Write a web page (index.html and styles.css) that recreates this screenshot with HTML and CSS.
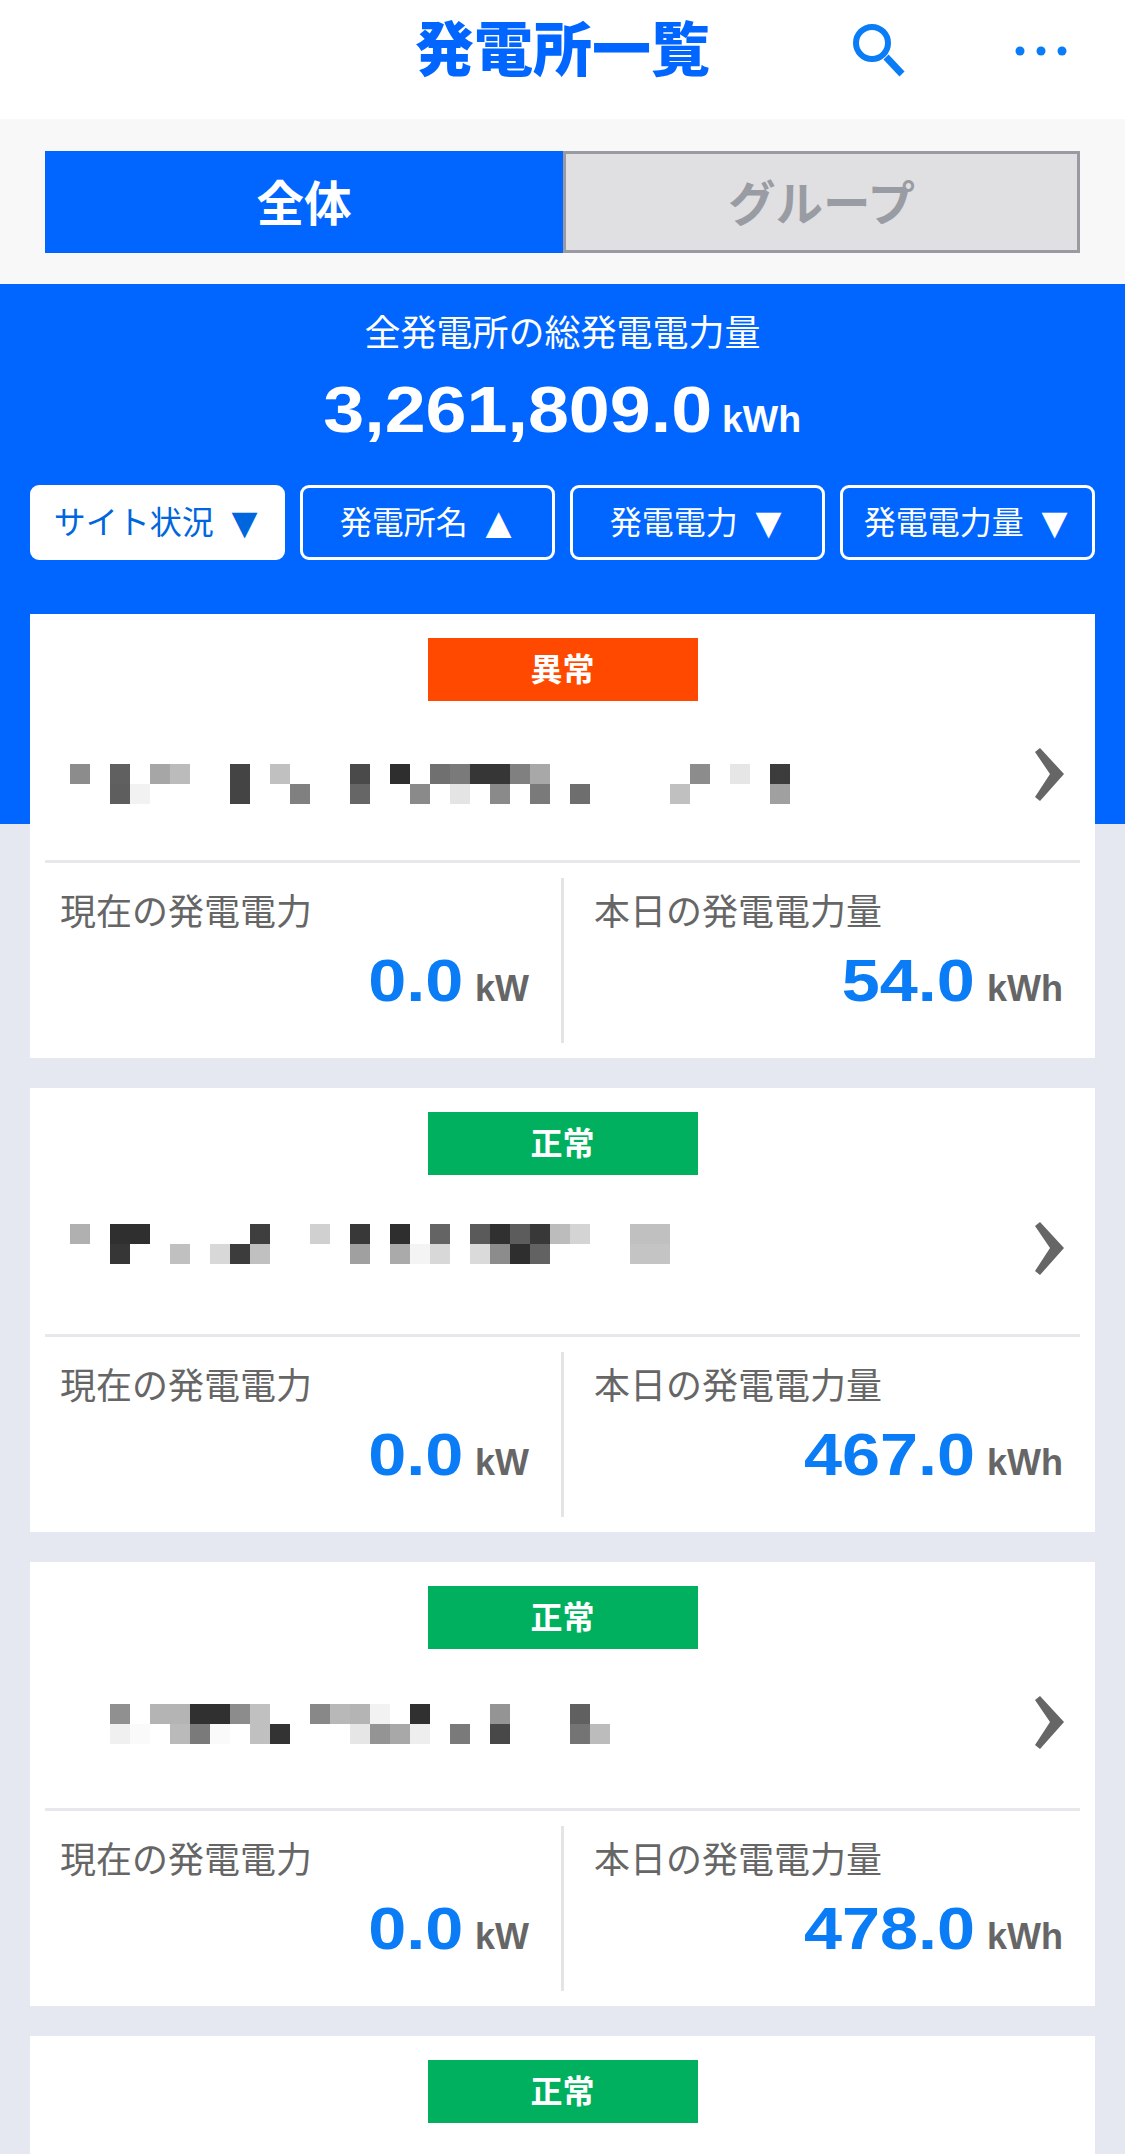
FILE: index.html
```html
<!DOCTYPE html>
<html lang="ja">

<head>
    <meta charset="UTF-8">
    <meta name="viewport" content="width=device-width, initial-scale=1.0">
    <title>発電所一覧</title>
    <link rel="stylesheet" href="styles.css">
</head>

<body>
    <header class="app-bar">
        <div></div>
        <h1>発電所一覧</h1>
        <div class="app-actions">
            <svg class="icon-search" width="52" height="54" viewBox="0 0 52 54">
                <circle cx="19" cy="19" r="16" fill="none" stroke="#0a7cf5" stroke-width="6" />
                <path d="M33 33 L49 50" fill="none" stroke="#0a7cf5" stroke-width="7" />
            </svg>
            <svg class="icon-more" width="52" height="10" viewBox="0 0 52 10">
                <circle cx="5" cy="5" r="4.5" fill="#0a7cf5" />
                <circle cx="26" cy="5" r="4.5" fill="#0a7cf5" />
                <circle cx="47" cy="5" r="4.5" fill="#0a7cf5" />
            </svg>
        </div>
    </header>

    <div class="tabs-wrap">
        <div class="tabs">
            <button class="tab active">全体</button>
            <button class="tab">グループ</button>
        </div>
    </div>

    <main class="content">
        <section class="summary">
            <p class="summary-title">全発電所の総発電電力量</p>
            <p class="summary-total"><span class="summary-num">3,261,809.0</span><span class="summary-unit">kWh</span></p>
            <div class="sorts">
                <button class="sort active">サイト状況 <span class="arrow">▼</span></button>
                <button class="sort">発電所名 <span class="arrow">▲</span></button>
                <button class="sort">発電電力 <span class="arrow">▼</span></button>
                <button class="sort">発電電力量 <span class="arrow">▼</span></button>
            </div>
        </section>

        <article class="card">
            <div class="badge alert">異常</div>
            <div class="name-row">
                <svg class="mosaic" width="720" height="146" viewBox="0 0 720 146" shape-rendering="crispEdges">
                    <g transform="translate(0 63)">
                        <rect x="0" y="0" width="20" height="20" fill="#8c8c8c" />
                        <rect x="40" y="0" width="20" height="20" fill="#606060" />
                        <rect x="80" y="0" width="20" height="20" fill="#a6a6a6" />
                        <rect x="100" y="0" width="20" height="20" fill="#bbbbbb" />
                        <rect x="160" y="0" width="20" height="20" fill="#444444" />
                        <rect x="200" y="0" width="20" height="20" fill="#c0c0c0" />
                        <rect x="280" y="0" width="20" height="20" fill="#4a4a4a" />
                        <rect x="320" y="0" width="20" height="20" fill="#2e2e2e" />
                        <rect x="360" y="0" width="20" height="20" fill="#707070" />
                        <rect x="380" y="0" width="20" height="20" fill="#7a7a7a" />
                        <rect x="400" y="0" width="40" height="20" fill="#363636" />
                        <rect x="440" y="0" width="20" height="20" fill="#808080" />
                        <rect x="460" y="0" width="20" height="20" fill="#a8a8a8" />
                        <rect x="620" y="0" width="20" height="20" fill="#8c8c8c" />
                        <rect x="660" y="0" width="20" height="20" fill="#e6e6e6" />
                        <rect x="700" y="0" width="20" height="20" fill="#3c3c3c" />
                        <rect x="40" y="20" width="20" height="20" fill="#5e5e5e" />
                        <rect x="60" y="20" width="20" height="20" fill="#f2f2f2" />
                        <rect x="160" y="20" width="20" height="20" fill="#444444" />
                        <rect x="220" y="20" width="20" height="20" fill="#808080" />
                        <rect x="280" y="20" width="20" height="20" fill="#666666" />
                        <rect x="340" y="20" width="20" height="20" fill="#8a8a8a" />
                        <rect x="380" y="20" width="20" height="20" fill="#e4e4e4" />
                        <rect x="420" y="20" width="20" height="20" fill="#8a8a8a" />
                        <rect x="460" y="20" width="20" height="20" fill="#7a7a7a" />
                        <rect x="500" y="20" width="20" height="20" fill="#6e6e6e" />
                        <rect x="600" y="20" width="20" height="20" fill="#c0c0c0" />
                        <rect x="700" y="20" width="20" height="20" fill="#a0a0a0" />
                    </g>
                </svg>
                <svg class="chevron" width="30" height="54" viewBox="0 0 30 54">
                    <polygon points="0,4 5,0 29,26 5,53 0,49 15,26" fill="#666666" />
                </svg>
            </div>
            <div class="stats">
                <div class="stat now">
                    <p class="stat-label">現在の発電電力</p>
                    <p class="stat-value"><span class="stat-num">0.0</span><span class="stat-unit">kW</span></p>
                </div>
                <div class="stat today">
                    <p class="stat-label">本日の発電電力量</p>
                    <p class="stat-value"><span class="stat-num">54.0</span><span class="stat-unit">kWh</span></p>
                </div>
            </div>
        </article>

        <article class="card">
            <div class="badge ok">正常</div>
            <div class="name-row">
                <svg class="mosaic" width="720" height="146" viewBox="0 0 720 146" shape-rendering="crispEdges">
                    <g transform="translate(0 49)">
                        <rect x="0" y="0" width="20" height="20" fill="#b0b0b0" />
                        <rect x="40" y="0" width="40" height="20" fill="#2f2f2f" />
                        <rect x="180" y="0" width="20" height="20" fill="#3e3e3e" />
                        <rect x="240" y="0" width="20" height="20" fill="#d0d0d0" />
                        <rect x="280" y="0" width="20" height="20" fill="#383838" />
                        <rect x="320" y="0" width="20" height="20" fill="#2e2e2e" />
                        <rect x="360" y="0" width="20" height="20" fill="#646464" />
                        <rect x="400" y="0" width="20" height="20" fill="#5a5a5a" />
                        <rect x="420" y="0" width="20" height="20" fill="#303030" />
                        <rect x="440" y="0" width="20" height="20" fill="#5c5c5c" />
                        <rect x="460" y="0" width="20" height="20" fill="#383838" />
                        <rect x="480" y="0" width="20" height="20" fill="#bcbcbc" />
                        <rect x="500" y="0" width="20" height="20" fill="#d4d4d4" />
                        <rect x="560" y="0" width="40" height="20" fill="#c0c0c0" />
                        <rect x="40" y="20" width="20" height="20" fill="#363636" />
                        <rect x="100" y="20" width="20" height="20" fill="#c0c0c0" />
                        <rect x="140" y="20" width="20" height="20" fill="#d8d8d8" />
                        <rect x="160" y="20" width="20" height="20" fill="#3c3c3c" />
                        <rect x="180" y="20" width="20" height="20" fill="#c0c0c0" />
                        <rect x="280" y="20" width="20" height="20" fill="#a0a0a0" />
                        <rect x="320" y="20" width="20" height="20" fill="#aaaaaa" />
                        <rect x="340" y="20" width="20" height="20" fill="#f4f4f4" />
                        <rect x="360" y="20" width="20" height="20" fill="#d8d8d8" />
                        <rect x="400" y="20" width="20" height="20" fill="#dadada" />
                        <rect x="420" y="20" width="20" height="20" fill="#8c8c8c" />
                        <rect x="440" y="20" width="20" height="20" fill="#2e2e2e" />
                        <rect x="460" y="20" width="20" height="20" fill="#626262" />
                        <rect x="560" y="20" width="40" height="20" fill="#c4c4c4" />
                    </g>
                </svg>
                <svg class="chevron" width="30" height="54" viewBox="0 0 30 54">
                    <polygon points="0,4 5,0 29,26 5,53 0,49 15,26" fill="#666666" />
                </svg>
            </div>
            <div class="stats">
                <div class="stat now">
                    <p class="stat-label">現在の発電電力</p>
                    <p class="stat-value"><span class="stat-num">0.0</span><span class="stat-unit">kW</span></p>
                </div>
                <div class="stat today">
                    <p class="stat-label">本日の発電電力量</p>
                    <p class="stat-value"><span class="stat-num">467.0</span><span class="stat-unit">kWh</span></p>
                </div>
            </div>
        </article>

        <article class="card">
            <div class="badge ok">正常</div>
            <div class="name-row">
                <svg class="mosaic" width="720" height="146" viewBox="0 0 720 146" shape-rendering="crispEdges">
                    <g transform="translate(0 55)">
                        <rect x="40" y="0" width="20" height="20" fill="#909090" />
                        <rect x="80" y="0" width="40" height="20" fill="#b4b4b4" />
                        <rect x="120" y="0" width="40" height="20" fill="#303030" />
                        <rect x="160" y="0" width="20" height="20" fill="#8c8c8c" />
                        <rect x="180" y="0" width="20" height="20" fill="#c0c0c0" />
                        <rect x="240" y="0" width="20" height="20" fill="#888888" />
                        <rect x="260" y="0" width="20" height="20" fill="#b8b8b8" />
                        <rect x="280" y="0" width="20" height="20" fill="#b4b4b4" />
                        <rect x="300" y="0" width="20" height="20" fill="#f2f2f2" />
                        <rect x="340" y="0" width="20" height="20" fill="#303030" />
                        <rect x="420" y="0" width="20" height="20" fill="#949494" />
                        <rect x="500" y="0" width="20" height="20" fill="#606060" />
                        <rect x="40" y="20" width="20" height="20" fill="#f0f0f0" />
                        <rect x="60" y="20" width="20" height="20" fill="#fafafa" />
                        <rect x="100" y="20" width="20" height="20" fill="#bababa" />
                        <rect x="120" y="20" width="20" height="20" fill="#7a7a7a" />
                        <rect x="140" y="20" width="20" height="20" fill="#fafafa" />
                        <rect x="180" y="20" width="20" height="20" fill="#c0c0c0" />
                        <rect x="200" y="20" width="20" height="20" fill="#333333" />
                        <rect x="280" y="20" width="20" height="20" fill="#e6e6e6" />
                        <rect x="300" y="20" width="20" height="20" fill="#949494" />
                        <rect x="320" y="20" width="20" height="20" fill="#a8a8a8" />
                        <rect x="340" y="20" width="20" height="20" fill="#eeeeee" />
                        <rect x="380" y="20" width="20" height="20" fill="#7a7a7a" />
                        <rect x="420" y="20" width="20" height="20" fill="#484848" />
                        <rect x="500" y="20" width="20" height="20" fill="#747474" />
                        <rect x="520" y="20" width="20" height="20" fill="#bcbcbc" />
                    </g>
                </svg>
                <svg class="chevron" width="30" height="54" viewBox="0 0 30 54">
                    <polygon points="0,4 5,0 29,26 5,53 0,49 15,26" fill="#666666" />
                </svg>
            </div>
            <div class="stats">
                <div class="stat now">
                    <p class="stat-label">現在の発電電力</p>
                    <p class="stat-value"><span class="stat-num">0.0</span><span class="stat-unit">kW</span></p>
                </div>
                <div class="stat today">
                    <p class="stat-label">本日の発電電力量</p>
                    <p class="stat-value"><span class="stat-num">478.0</span><span class="stat-unit">kWh</span></p>
                </div>
            </div>
        </article>

        <article class="card last">
            <div class="badge ok">正常</div>
        </article>
    </main>
</body>

</html>
```

FILE: styles.css
```css
* {
    box-sizing: border-box;
}

html,
body {
    height: 2154px;
    overflow: hidden;
}

body {
    margin: 0;
    font-family: "Liberation Sans", "Noto Sans CJK JP", sans-serif;
    background-color: #e5e8f1;
}

p,
h1 {
    margin: 0;
}

button {
    font: inherit;
    margin: 0;
    padding: 0;
}

/* top bar */
.app-bar {
    display: grid;
    grid-template-columns: 1fr auto 1fr;
    align-items: center;
    height: 119px;
    padding-bottom: 18px;
    background: white;
}

.app-bar h1 {
    font-size: 59px;
    line-height: 90px;
    font-weight: 900;
    color: #0066ff;
}

.app-actions {
    display: flex;
    align-items: center;
    padding-left: 143px;
    gap: 110px;
}

.icon-search {
    flex: none;
}

.icon-more {
    flex: none;
}

/* tabs */
.tabs-wrap {
    height: 165px;
    padding: 32px 45px 0;
    background-color: #f8f8f8;
}

.tabs {
    display: grid;
    grid-template-columns: 518px 517px;
    height: 102px;
}

.tab {
    padding-bottom: 3px;
    font-size: 47.5px;
    font-weight: 700;
    color: #9a9ca4;
    background-color: #e0e0e2;
    border: 3px solid #9a9aa2;
}

.tab.active {
    color: white;
    background-color: #0066ff;
    border-color: #0066ff;
}

/* blue summary + cards */
.content {
    padding: 0 30px;
    background: linear-gradient(#0066ff 540px, #e5e8f1 540px);
}

.summary {
    height: 330px;
    padding-top: 31px;
    color: white;
    text-align: center;
}

.summary-title {
    font-size: 36px;
    line-height: 38px;
}

.summary-total {
    display: flex;
    justify-content: center;
    align-items: baseline;
    gap: 10px;
    margin-top: 22px;
}

.summary-num {
    margin-left: 50px;
    font-size: 64px;
    line-height: 70px;
    font-weight: 700;
    transform: scaleX(1.15);
    transform-origin: right;
}

.summary-unit {
    font-size: 37.5px;
    font-weight: 700;
}

.sorts {
    display: flex;
    justify-content: space-between;
    margin-top: 40px;
}

.sort {
    width: 255px;
    height: 75px;
    padding-left: 5px;
    font-size: 32px;
    line-height: 40px;
    color: white;
    background: transparent;
    border: 3px solid white;
    border-radius: 9px;
}

.sort.active {
    color: #0066dd;
    background: white;
}

.arrow {
    font-size: 44px;
    line-height: 0;
    vertical-align: -4px;
}

.card {
    height: 444px;
    margin-bottom: 30px;
    padding: 24px 15px 0;
    background: white;
}

.badge {
    width: 270px;
    height: 63px;
    margin: 0 auto;
    font-size: 32px;
    line-height: 65px;
    font-weight: 700;
    color: white;
    text-align: center;
}

.alert {
    background-color: #ff4800;
}

.ok {
    background-color: #00b05f;
}

.name-row {
    display: flex;
    justify-content: space-between;
    align-items: flex-start;
    height: 146px;
    padding: 47px 15px 0 25px;
    margin-bottom: 13px;
}

.mosaic {
    display: block;
    margin-top: -47px;
}

.chevron {
    display: block;
}

.stats {
    display: grid;
    grid-template-columns: 519px 516px;
    border-top: 3px solid #e8e8ec;
    padding-top: 15px;
}

.stat {
    height: 165px;
    padding-top: 17px;
}

.stat.now {
    padding-left: 15px;
    padding-right: 32px;
    border-right: 3px solid #e4e4e4;
}

.stat.today {
    padding-left: 30px;
    padding-right: 17px;
}

.stat-label {
    font-size: 36px;
    line-height: 36px;
    color: #666666;
}

.stat-value {
    display: flex;
    justify-content: flex-end;
    align-items: baseline;
    gap: 12px;
    margin-top: 20px;
}

.stat-num {
    font-size: 60px;
    line-height: 60px;
    font-weight: 700;
    color: #0a7cf5;
    transform: scaleX(1.14);
    transform-origin: right;
}

.stat-unit {
    font-size: 36px;
    font-weight: 700;
    color: #666666;
}
```
